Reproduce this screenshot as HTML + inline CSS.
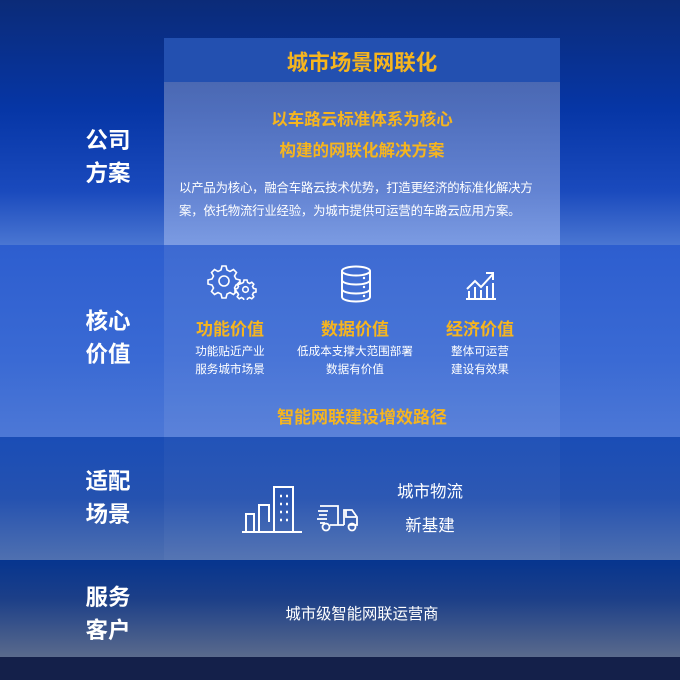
<!DOCTYPE html>
<html><head><meta charset="utf-8"><style>
*{margin:0;padding:0;box-sizing:border-box}
body{width:680px;height:680px;overflow:hidden;position:relative;font-family:"Liberation Sans","Noto Sans CJK SC",sans-serif;color:#fff;background:#14204a}
.b{position:absolute;left:0;width:680px}
.lab{position:absolute;left:68px;width:80px;text-align:center;font-size:22.5px;font-weight:bold;line-height:33px}
.y{color:#f6b51e;font-weight:bold;text-align:center;position:absolute}
.c{position:absolute;text-align:center}
</style></head><body>
<div class="b" style="top:0;height:245px;background:linear-gradient(#0b2b78 0,#0636a6 45%,#1a4abd 78%,#4a76d2 100%)"></div>
<div class="b" style="top:245px;height:192px;background:linear-gradient(#2d5ecf,#3a6ad4 60%,#4d78d6)"></div>
<div class="b" style="top:437px;height:123px;background:linear-gradient(#1a4db6,#2552b0 50%,#4f70b0)"></div>
<div class="b" style="top:560px;height:97px;background:linear-gradient(#06358f,#1c3f88 40%,#5a6a8c)"></div>
<div class="b" style="top:657px;height:23px;background:#14204a"></div>
<div style="position:absolute;left:164px;top:38px;width:396px;height:44px;background:#2350b0"></div>
<div style="position:absolute;left:164px;top:82px;width:396px;height:163px;background:linear-gradient(rgba(120,140,195,.6),rgba(150,175,235,.65))"></div>
<div style="position:absolute;left:164px;top:245px;width:396px;height:192px;background:rgba(255,255,255,.08)"></div>
<div style="position:absolute;left:164px;top:437px;width:396px;height:123px;background:rgba(255,255,255,.04)"></div>

<div class="y" style="left:164px;width:396px;top:46px;font-size:21.5px">城市场景网联化</div>
<div class="y" style="left:164px;width:396px;top:106px;font-size:16.5px">以车路云标准体系为核心</div>
<div class="y" style="left:164px;width:396px;top:137px;font-size:16.5px">构建的网联化解决方案</div>
<div class="c" style="left:179px;width:380px;top:177px;font-size:12.4px;line-height:23px;text-align:left;letter-spacing:-0.2px;white-space:nowrap">以产品为核心，融合车路云技术优势，打造更经济的标准化解决方<br>案，依托物流行业经验，为城市提供可运营的车路云应用方案。</div>

<div class="lab" style="top:124px">公司<br>方案</div>
<div class="lab" style="top:305px">核心<br>价值</div>
<div class="lab" style="top:465px">适配<br>场景</div>
<div class="lab" style="top:581px">服务<br>客户</div>

<svg style="position:absolute;left:205px;top:264px" width="52" height="36" viewBox="0 0 52 36" fill="none" stroke="#fff" stroke-width="1.6">
<path d="M17 2h4l1 4 3 1.5 3.5-2 3 3-2 3.5 1.5 3 4 1v4l-4 1-1.5 3 2 3.5-3 3-3.5-2-3 1.5-1 4h-4l-1-4-3-1.5-3.5 2-3-3 2-3.5-1.5-3-4-1v-4l4-1 1.5-3-2-3.5 3-3 3.5 2 3-1.5z"/>
<circle cx="19" cy="17" r="5"/>
<path d="M39 16h3l.6 2.5 2 1 2.2-1.3 2 2-1.3 2.2 1 2 2.5.6v3l-2.5.6-1 2 1.3 2.2-2 2-2.2-1.3-2 1-.6 2.5h-3l-.6-2.5-2-1-2.2 1.3-2-2 1.3-2.2-1-2-2.5-.6v-3l2.5-.6 1-2-1.3-2.2 2-2 2.2 1.3 2-1z"/>
<circle cx="40.5" cy="25.5" r="2.8"/>
</svg>
<svg style="position:absolute;left:339px;top:265px" width="34" height="38" viewBox="0 0 34 38" fill="none" stroke="#fff" stroke-width="2">
<ellipse cx="17" cy="6" rx="14" ry="4.5"/>
<path d="M3 6v26c0 2.5 6 4.5 14 4.5s14-2 14-4.5V6M3 15c0 2.5 6 4.5 14 4.5S31 17.5 31 15M3 24c0 2.5 6 4.5 14 4.5S31 26.5 31 24"/>
<path d="M25 13v.1M25 22v.1M25 31v.1" stroke-linecap="round" stroke-width="2.4"/>
</svg>
<svg style="position:absolute;left:465px;top:269px" width="32" height="32" viewBox="0 0 32 32" fill="none" stroke="#fff" stroke-width="2">
<path d="M1 30h30M4 30v-8M10 30v-12M16 30v-9M22 30v-13M28 30v-16M2 20l8-8 6 6 12-13M21 4h7v7"/>
</svg>

<div class="y" style="left:180px;width:100px;top:315px;font-size:17px">功能价值</div>
<div class="y" style="left:305px;width:100px;top:315px;font-size:17px">数据价值</div>
<div class="y" style="left:430px;width:100px;top:315px;font-size:17px">经济价值</div>
<div class="c" style="left:175px;width:110px;top:343px;font-size:11.6px;line-height:18px">功能贴近产业<br>服务城市场景</div>
<div class="c" style="left:285px;width:140px;top:343px;font-size:11.6px;line-height:18px">低成本支撑大范围部署<br>数据有价值</div>
<div class="c" style="left:430px;width:100px;top:343px;font-size:11.6px;line-height:18px">整体可运营<br>建设有效果</div>
<div class="y" style="left:164px;width:396px;top:403px;font-size:17px">智能网联建设增效路径</div>

<svg style="position:absolute;left:240px;top:484px" width="64" height="50" viewBox="0 0 64 50" fill="none" stroke="#fff" stroke-width="2">
<path d="M2 48h60M6 47V30h8v17M19 47V21h10v17M34 47V3h19v44"/>
<path d="M19 47V21" /><path d="M40 12h2M46 12h2M40 20h2M46 20h2M40 28h2M46 28h2M40 36h2M46 36h2" stroke-width="2.4"/>
</svg>
<svg style="position:absolute;left:316px;top:503px" width="44" height="30" viewBox="0 0 44 30" fill="none" stroke="#fff" stroke-width="1.8">
<path d="M4 3h18v19M14 22h14M33 22h8V14l-5-7h-8v15M30 7v7h10M2 8h10M3 12h8M1 16h10M4 20h5"/>
<circle cx="10" cy="24" r="3.5"/><circle cx="36" cy="24" r="3.5"/>
</svg>
<div class="c" style="left:375px;width:110px;top:478px;font-size:16.5px">城市物流</div>
<div class="c" style="left:375px;width:110px;top:512px;font-size:16.5px">新基建</div>
<div class="c" style="left:164px;width:396px;top:602px;font-size:15.3px">城市级智能网联运营商</div>
</body></html>
